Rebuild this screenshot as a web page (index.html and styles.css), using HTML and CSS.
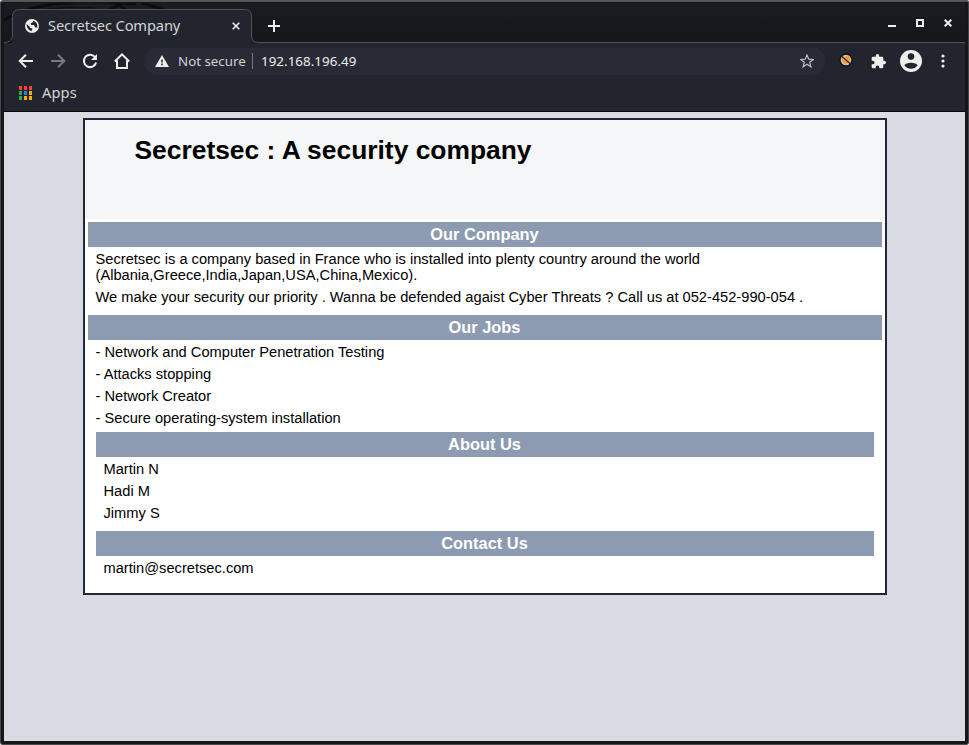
FILE: index.html
```html
<!DOCTYPE html>
<html lang="en">
<head>
<meta charset="utf-8">
<title>Secretsec Company</title>
<link rel="stylesheet" href="styles.css">
</head>
<body>
<div class="window">
  <header class="titlebar">
    <svg class="wallpaper" width="240" height="42" viewBox="0 0 240 42"><g fill="none" stroke="#0c0d10"><path d="M-2 18Q40-8 132 1" stroke-width="3"/><path d="M-2 16Q35 2 90 5" stroke-width="1"/><path d="M99 10L119 0M112 0L126 10M138 0L170 10" stroke-width="3"/></g></svg>
    <svg class="tab-shape" width="961" height="40" viewBox="0 0 961 40"><path d="M0 39.5V39C6 38 8.500 36 8.500 31V8.500Q8.500 1.500 15.500 1.500H240.500Q247.500 1.500 247.500 8.500V29Q247.500 34.500 255 34.500H961V40H0Z" fill="#22252e"/><path d="M0 34.500C6 34.500 8.500 31 8.500 27V8.500Q8.500 1.500 15.500 1.500H240.500Q247.500 1.500 247.500 8.500V27Q247.500 34.500 255 34.500H961" fill="none" stroke="#505255"/></svg>
    <div class="tab">
      <svg class="globe" width="14" height="14" viewBox="0 0 14 14"><circle cx="7" cy="7" r="7" fill="#eeeeec"/><path d="M1.500 5L4.500 7.500L5 9L7.500 9.500L6.500 12.200Q2 11 1.500 5ZM8.500 1.700L7.500 3.500L5.500 4.500L6.500 6H9L10.200 8.500H12.500Q12.500 3 8.500 1.700Z" fill="#22252e"/></svg>
      <span class="tab-title">Secretsec Company</span>
      <svg class="tab-close" width="8" height="8" viewBox="0 0 8 8"><path d="M.7.7L7.300 7.300M7.300.7L.7 7.300" stroke="#eeeeec" stroke-width="1.600"/></svg>
    </div>
    <svg class="new-tab" width="12" height="12" viewBox="0 0 12 12"><path d="M6 0V12M0 6H12" stroke="#eeeeec" stroke-width="2"/></svg>
    <div class="controls">
      <svg width="8" height="8" viewBox="0 0 8 8"><path d="M0 7H8" stroke="#eeeeec" stroke-width="2"/></svg>
      <svg width="8" height="8" viewBox="0 0 8 8"><path d="M1 1H7V7H1Z" fill="none" stroke="#eeeeec" stroke-width="2"/></svg>
      <svg width="8" height="8" viewBox="0 0 8 8"><path d="M.7.7L7.300 7.300M7.300.7L.7 7.300" stroke="#eeeeec" stroke-width="2"/></svg>
    </div>
  </header>
  <nav class="toolbar">
    <svg class="nav-icon" viewBox="0 0 16 16"><path d="M15 8H2M8 1.700L1.700 8L8 14.300" fill="none" stroke="#eeeeec" stroke-width="2"/></svg>
    <svg class="nav-icon" viewBox="0 0 16 16"><path d="M1 8H14M8 1.700L14.300 8L8 14.300" fill="none" stroke="#777a7e" stroke-width="2"/></svg>
    <svg class="nav-icon" viewBox="0 0 16 16"><path d="M13.300 4.500A6.200 6.200 0 1 0 14.100 9.500" fill="none" stroke="#eeeeec" stroke-width="2"/><path d="M15 1V7H9Z" fill="#eeeeec"/></svg>
    <svg class="nav-icon" viewBox="0 0 16 16"><path d="M.8 8.500L8 1.400L15.200 8.500M3 7.500V15H13V7.500" fill="none" stroke="#eeeeec" stroke-width="2"/></svg>
    <div class="address">
      <svg width="14" height="12" viewBox="0 0 14 12"><path d="M7 0L14 12H0Z" fill="#eeeeec"/><path d="M7 4.500V7.500M7 8.500V10.300" stroke="#22252e" stroke-width="1.500"/></svg>
      <span class="security">Not secure</span>
      <span class="url">192.168.196.49</span>
      <svg class="star" width="14" height="14" viewBox="0 0 14 14"><path d="M7 1L8.700 5.200L13.200 5.500L9.700 8.300L10.900 12.800L7 10.300L3.100 12.800L4.300 8.300L.8 5.500L5.300 5.200Z" fill="none" stroke="#bdbebf" stroke-width="1.200"/></svg>
    </div>
    <svg class="extension" width="14" height="14" viewBox="0 0 14 14"><circle cx="7" cy="7" r="6" fill="#cbc6c0" stroke="#111216" stroke-width="1.300"/><path d="M3 4L5 5L8 2.500L10.500 3L11.500 6L10 10L6 11L3 8Z" fill="#f29a3b"/><path d="M2 2.500L12 11.500" stroke="#292522" stroke-width="1.200"/></svg>
    <svg class="puzzle" width="15" height="15" viewBox="1 1 22 22"><path d="M20.500 11H19V7a2 2 0 0 0-2-2h-4V3.500a2.500 2.500 0 0 0-5 0V5H4a2 2 0 0 0-2 2v3.800h1.500a2.700 2.700 0 0 1 0 5.400H2V20a2 2 0 0 0 2 2h3.800v-1.500a2.700 2.700 0 0 1 5.400 0V22H17a2 2 0 0 0 2-2v-4h1.500a2.500 2.500 0 0 0 0-5z" fill="#eeeeec"/></svg>
    <svg class="profile" width="22" height="22" viewBox="0 0 22 22"><circle cx="11" cy="11" r="11" fill="#eeeeec"/><circle cx="11" cy="6.600" r="3.300" fill="#22252e"/><path d="M4.400 15.200C5.500 11.800 16.500 11.800 17.600 15.200C14.500 20 7.500 20 4.400 15.200Z" fill="#22252e"/></svg>
    <svg class="more" width="4" height="14" viewBox="0 0 4 14"><g fill="#eeeeec"><circle cx="2" cy="2" r="1.600"/><circle cx="2" cy="7" r="1.600"/><circle cx="2" cy="12" r="1.600"/></g></svg>
  </nav>
  <div class="bookmarks">
    <div class="apps-grid"><i class="red"></i><i class="red"></i><i class="red"></i><i class="green"></i><i class="blue"></i><i class="yellow"></i><i class="green"></i><i class="yellow"></i><i class="yellow"></i></div>
    <span class="bookmark-label">Apps</span>
  </div>
  <main class="viewport">
    <article class="page">
      <h1>Secretsec : A security company</h1>
      <div class="content">
        <h2>Our Company</h2>
        <section>
          <p>Secretsec is a company based in France who is installed into plenty country around the world (Albania,Greece,India,Japan,USA,China,Mexico).</p>
          <p>We make your security our priority . Wanna be defended agaist Cyber Threats ? Call us at 052-452-990-054 .</p>
        </section>
        <h2>Our Jobs</h2>
        <section class="jobs">
          <p>- Network and Computer Penetration Testing</p>
          <p>- Attacks stopping</p>
          <p>- Network Creator</p>
          <p>- Secure operating-system installation</p>
          <h2>About Us</h2>
          <section>
            <p>Martin N</p>
            <p>Hadi M</p>
            <p>Jimmy S</p>
          </section>
          <h2>Contact Us</h2>
          <section><p>martin@secretsec.com</p></section>
        </section>
      </div>
    </article>
  </main>
</div>
</body>
</html>
```
FILE: styles.css
```css
* { box-sizing: border-box; }
body { margin: 0; background: #fff; }
svg { display: block; flex: none; }
.window {
  width: 969px;
  height: 745px;
  display: flex;
  flex-direction: column;
  padding: 1px 3px 3px 3px;
  border: 1px solid #48494b;
  border-top: 2px solid #555756;
  border-right-color: #444448;
  border-radius: 3px 2px 3px 3px;
  background: #15161b;
  font-family: "Noto Sans", sans-serif;
  color: #eeeeec;
}
.titlebar {
  position: relative;
  height: 40px;
  flex: none;
  display: flex;
  background: linear-gradient(#1a1c23, #15161a);
}
.wallpaper { position: absolute; left: 0; top: 0; }
.tab-shape { position: absolute; left: 0; top: 5px; }
.tab {
  position: relative;
  width: 248px;
  height: 34px;
  margin-top: 6px;
  padding: 0 12px 0 21px;
  display: flex;
  align-items: center;
}
.tab-title { margin: -2px 0 0 9px; font-size: 14.67px; letter-spacing: -0.13px; line-height: 20px; color: #d3d4d5; }
.tab-close { margin-left: auto; }
.new-tab { position: relative; margin: 17px 0 0 16px; }
.controls { display: flex; gap: 20px; margin: 16px 13px 0 auto; }
.toolbar {
  height: 36px;
  flex: none;
  display: flex;
  align-items: center;
  padding-left: 14px;
  background: #22252e;
}
.nav-icon { width: 16px; height: 16px; margin-right: 16px; }
.address {
  width: 681px;
  height: 28px;
  margin-left: -2px;
  padding: 0 11px;
  display: flex;
  align-items: center;
  border-radius: 14px;
  background: #282a35;
  font-size: 13.33px;
  line-height: 18px;
}
.security { width: 67px; margin-left: 9px; color: #d0d1d2; white-space: nowrap; }
.url { margin-left: 7px; padding-left: 8px; border-left: 1px solid #777980; line-height: 16px; letter-spacing: 0.06px; }
.star { margin-left: auto; }
.extension { margin: -2px 0 0 14px; }
.puzzle { margin-left: 18px; }
.profile { margin-left: 14px; }
.more { margin-left: 19px; }
.bookmarks {
  height: 33px;
  flex: none;
  display: flex;
  align-items: center;
  padding: 0 0 5px 15px;
  gap: 10px;
  border-bottom: 1px solid #090a0c;
  background: #22252e;
  color: #d3d4d5;
  font-size: 14.67px;
  line-height: 20px;
}
.bookmark-label { margin-top: -2px; letter-spacing: 0.1px; }
.apps-grid { display: grid; grid-template-columns: repeat(3, 3px); gap: 1px 2px; }
.apps-grid i { height: 4px; }
.red { background: #f44336; }
.green { background: #30a55a; }
.blue { background: #1e88e5; }
.yellow { background: #ffb000; }
.viewport {
  flex: 1;
  padding: 6px 0 0 79px;
  background: #d8dbe2;
  color: #000;
  font-family: "Liberation Sans", sans-serif;
}
.page { width: 804px; height: 477px; border: 2px solid #212738; background: #fff; }
h1 { margin: 0; height: 99px; padding: 15px 0 0 49.500px; background: #f5f6f7; font-size: 26.4px; line-height: 30px; }
.content { padding: 3px; }
h2 { margin: 0; height: 25px; padding-right: 1px; background: #8d9bb2; color: #fff; font-size: 16.4px; line-height: 25px; text-align: center; }
section { padding: 4px 8px 10px; font-size: 14.667px; line-height: 16px; }
p { margin: 0 0 6px -0.5px; }
section > p:last-child { margin-bottom: 0; }
```
